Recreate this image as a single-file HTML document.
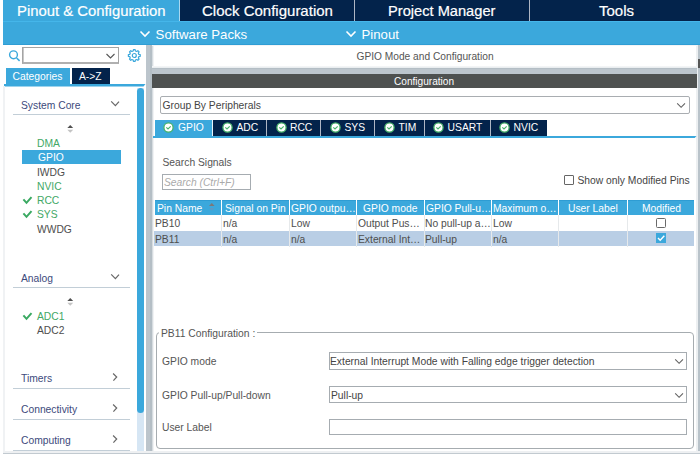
<!DOCTYPE html>
<html><head><meta charset="utf-8">
<style>
*{margin:0;padding:0;box-sizing:border-box}
html,body{width:700px;height:454px;overflow:hidden;background:#fff}
body{position:relative;font-family:"Liberation Sans",sans-serif}
.a{position:absolute}
.t{position:absolute;white-space:nowrap;font-family:"Liberation Sans",sans-serif;font-size:10.3px;line-height:1}
.tab{position:absolute;top:0;height:21px;background:#03234b}
.tt{position:absolute;white-space:nowrap;font-size:15px;line-height:1;color:#fff;top:3px;-webkit-text-stroke:0.2px #fff}
.sep{position:absolute;top:0;height:21px;width:1px;background:#aeb6c4}
.cat{color:#3d4a7c}
.grn{color:#42a866}
.drk{color:#4e4e4e}
.line{position:absolute;height:1px;background:#c2ced7}
.box{position:absolute;border:1px solid #a6acb1;background:#fff}
.hd{position:absolute;top:200px;height:15px;background:#3ba8dc;border-top:1px solid #2e9cd3}
.hdt{position:absolute;top:203.6px;color:#fff}
.cs{position:absolute;width:1px;background:#e6e9eb}
</style></head><body>
<!-- top tabs -->
<div class="a" style="left:3px;top:0;width:176px;height:21px;background:#3ba8dc"></div>
<div class="a" style="left:179px;top:0;width:1px;height:21px;background:#a8d8f0"></div>
<div class="tab" style="left:180px;width:174px"></div>
<div class="sep" style="left:354px"></div>
<div class="tab" style="left:355px;width:174px"></div>
<div class="sep" style="left:529px"></div>
<div class="tab" style="left:530px;width:170px"></div>
<div class="tt" style="left:17px;top:4px;font-size:14.85px">Pinout &amp; Configuration</div>
<div class="tt" style="left:202px">Clock Configuration</div>
<div class="tt" style="left:388px;top:4px;font-size:14.65px">Project Manager</div>
<div class="tt" style="left:599px">Tools</div>
<!-- software packs bar -->
<div class="a" style="left:3px;top:21px;width:697px;height:24px;background:#3ba8dc;border-top:1px solid #45b6ea;border-bottom:1px solid #2f9dd4"></div>
<svg class="a" style="left:139px;top:30px" width="12" height="8"><path d="M1.5 1.5 L6 6 L10.5 1.5" fill="none" stroke="#fff" stroke-width="1.6"/></svg>
<div class="t" style="left:155.6px;top:28px;font-size:13.2px;color:#fff">Software Packs</div>
<svg class="a" style="left:345px;top:30px" width="12" height="8"><path d="M1.5 1.5 L6 6 L10.5 1.5" fill="none" stroke="#fff" stroke-width="1.6"/></svg>
<div class="t" style="left:361.5px;top:28px;font-size:13.2px;color:#fff">Pinout</div>

<!-- separators -->
<div class="a" style="left:146px;top:45px;width:6px;height:409px;background:linear-gradient(90deg,#bcc5cc 0,#bcc5cc 4px,#b4bec5 4px,#b4bec5 6px)"></div><div class="a" style="left:152px;top:45px;width:1px;height:409px;background:#d6dce0"></div><div class="a" style="left:153px;top:45px;width:1px;height:409px;background:#f0f2f4"></div>
<div class="a" style="left:696px;top:45px;width:2px;height:407px;background:#eceff1"></div><div class="a" style="left:698px;top:45px;width:2px;height:407px;background:#b9c3ca"></div><div class="a" style="left:698px;top:59px;width:2px;height:9px;background:#555"></div>
<div class="a" style="left:3px;top:451px;width:697px;height:2px;background:#eef0f2"></div><div class="a" style="left:3px;top:453px;width:697px;height:1px;background:#c2cad0"></div>

<!-- LEFT PANEL -->
<svg class="a" style="left:7px;top:48px" width="16" height="16"><circle cx="6.5" cy="6.8" r="3.9" fill="none" stroke="#3ba8dc" stroke-width="1.4"/><path d="M9.6 10 L12.6 12.8" stroke="#3ba8dc" stroke-width="1.6"/></svg>
<div class="box" style="left:22px;top:47px;width:97px;height:17px;border:1px solid #a4a4a4;border-bottom:2px solid #b0b0b0;box-shadow:inset 1px 0 0 #c8c8c8"></div>
<svg class="a" style="left:105px;top:52px" width="11" height="8"><path d="M1.5 2 L5.5 6 L9.5 2" fill="none" stroke="#555" stroke-width="1.1"/></svg>
<svg class="a" style="left:127px;top:48px" width="15" height="15" viewBox="0.2 0 15 15"><g fill="none" stroke="#3ba8dc" stroke-width="1.2" stroke-linejoin="round"><path d="M6.65 1.56 L8.35 1.56 L8.60 2.93 L9.96 3.49 L11.10 2.70 L12.30 3.90 L11.51 5.04 L12.07 6.40 L13.44 6.65 L13.44 8.35 L12.07 8.60 L11.51 9.96 L12.30 11.10 L11.10 12.30 L9.96 11.51 L8.60 12.07 L8.35 13.44 L6.65 13.44 L6.40 12.07 L5.04 11.51 L3.90 12.30 L2.70 11.10 L3.49 9.96 L2.93 8.60 L1.56 8.35 L1.56 6.65 L2.93 6.40 L3.49 5.04 L2.70 3.90 L3.90 2.70 L5.04 3.49 L6.40 2.93Z"/><circle cx="7.5" cy="7.5" r="2"/></g></svg>
<div class="a" style="left:6px;top:68px;width:64px;height:16px;background:#3ba8dc"></div>
<div class="t" style="left:12.5px;top:72px;color:#fff">Categories</div>
<div class="a" style="left:72px;top:68px;width:38px;height:16px;background:#03234b"></div>
<div class="t" style="left:79px;top:72px;color:#fff">A-&gt;Z</div>
<div class="a" style="left:4px;top:84px;width:141.5px;height:2.5px;background:#3ba8dc;clip-path:polygon(0 0,100% 0,calc(100% - 2px) 100%,0 100%)"></div>
<div class="a" style="left:3px;top:86px;width:2px;height:366px;background:#f0f2f4"></div>
<!-- scrollbar -->
<div class="a" style="left:137px;top:88px;width:7px;height:363px;background:#d6e6f4"></div>
<div class="a" style="left:137px;top:88px;width:7px;height:325px;background:#3ba8dc;border-radius:3.5px"></div>

<div class="t cat" style="left:21px;top:101px">System Core</div>
<svg class="a" style="left:110px;top:99px" width="11" height="8"><path d="M1.2 2.4 L5.4 6.6 L9 2.6" fill="none" stroke="#686868" stroke-width="1.2"/></svg>
<div class="line" style="left:13px;top:114px;width:117px"></div>
<svg class="a" style="left:66px;top:124px" width="9" height="10"><path d="M1.3 4 L4.25 1 L7.2 4Z" fill="#505050"/><path d="M1.3 5.7 L4.25 8.8 L7.2 5.7Z" fill="#c4c4c4"/></svg>
<div class="t grn" style="left:37px;top:139px">DMA</div>
<div class="a" style="left:22px;top:150px;width:99px;height:14px;background:#3ba8dc"></div>
<div class="t" style="left:38px;top:153px;color:#fff">GPIO</div>
<div class="t drk" style="left:37px;top:168px">IWDG</div>
<div class="t grn" style="left:37px;top:182px">NVIC</div>
<svg class="a" style="left:22px;top:196px" width="11" height="9"><path d="M1.4 3.3 L4.5 6.8 L9.5 1.2" fill="none" stroke="#3aa962" stroke-width="2"/></svg>
<div class="t grn" style="left:37px;top:196px">RCC</div>
<svg class="a" style="left:22px;top:210px" width="11" height="9"><path d="M1.4 3.3 L4.5 6.8 L9.5 1.2" fill="none" stroke="#3aa962" stroke-width="2"/></svg>
<div class="t grn" style="left:37px;top:210px">SYS</div>
<div class="t drk" style="left:37px;top:225px">WWDG</div>

<div class="t cat" style="left:21px;top:274px">Analog</div>
<svg class="a" style="left:110px;top:271.5px" width="11" height="8"><path d="M1.2 2.4 L5.4 6.6 L9 2.6" fill="none" stroke="#686868" stroke-width="1.2"/></svg>
<div class="line" style="left:13px;top:287px;width:117px"></div>
<svg class="a" style="left:66px;top:296.5px" width="9" height="10"><path d="M1.3 4 L4.25 1 L7.2 4Z" fill="#505050"/><path d="M1.3 5.7 L4.25 8.8 L7.2 5.7Z" fill="#c4c4c4"/></svg>
<svg class="a" style="left:22px;top:312px" width="11" height="9"><path d="M1.4 3.3 L4.5 6.8 L9.5 1.2" fill="none" stroke="#3aa962" stroke-width="2"/></svg>
<div class="t grn" style="left:37px;top:312px">ADC1</div>
<div class="t drk" style="left:37px;top:326px">ADC2</div>

<div class="t cat" style="left:21px;top:374px">Timers</div>
<svg class="a" style="left:111px;top:372px" width="8" height="11"><path d="M2.1 1.5 L5.7 5 L2.4 8.6" fill="none" stroke="#686868" stroke-width="1.2"/></svg>
<div class="line" style="left:13px;top:388px;width:117px"></div>
<div class="t cat" style="left:21px;top:405px">Connectivity</div>
<svg class="a" style="left:111px;top:403px" width="8" height="11"><path d="M2.1 1.5 L5.7 5 L2.4 8.6" fill="none" stroke="#686868" stroke-width="1.2"/></svg>
<div class="line" style="left:13px;top:419px;width:117px"></div>
<div class="t cat" style="left:21px;top:436px">Computing</div>
<svg class="a" style="left:111px;top:434px" width="8" height="11"><path d="M2.1 1.5 L5.7 5 L2.4 8.6" fill="none" stroke="#686868" stroke-width="1.2"/></svg>
<div class="line" style="left:13px;top:450px;width:117px"></div>

<!-- RIGHT PANEL -->
<div class="a" style="left:152px;top:45px;width:545px;height:1px;background:#f2f4f6"></div><div class="a" style="left:152px;top:66px;width:545px;height:2px;background:linear-gradient(#f7f8f9,#e6eaed)"></div><div class="a" style="left:152px;top:68px;width:545px;height:6px;background:#bcc5cc;border-top:1px solid #b4bec5"></div>
<div class="t" style="left:356.5px;top:52px;color:#555;font-size:10.2px">GPIO Mode and Configuration</div>
<div class="a" style="left:152px;top:74px;width:545px;height:14px;background:#4e5150"></div>
<div class="t" style="left:394px;top:77px;color:#fff;font-size:10.1px">Configuration</div>

<div class="box" style="left:160px;top:96px;width:530px;height:18px;border-color:#a9adb1;border-radius:2px"></div>
<div class="t" style="left:162.5px;top:101px;color:#444">Group By Peripherals</div>
<svg class="a" style="left:676px;top:101px" width="11" height="8"><path d="M1.2 2.4 L5.1 6.3 L9 2.4" fill="none" stroke="#606060" stroke-width="1.1"/></svg>

<!-- tabs -->
<div class="a" style="left:155px;top:120px;width:57px;height:16px;background:#3ba8dc"></div>
<div class="a" style="left:212px;top:120px;width:1px;height:16px;background:#e8f4fb"></div>
<div class="a" style="left:213px;top:120px;width:334px;height:16px;background:#03234b"></div>
<div class="a" style="left:266px;top:120px;width:1px;height:16px;background:#aeb6c4"></div>
<div class="a" style="left:320px;top:120px;width:1px;height:16px;background:#aeb6c4"></div>
<div class="a" style="left:374px;top:120px;width:1px;height:16px;background:#aeb6c4"></div>
<div class="a" style="left:424px;top:120px;width:1px;height:16px;background:#aeb6c4"></div>
<div class="a" style="left:490px;top:120px;width:1px;height:16px;background:#aeb6c4"></div>
<div class="a" style="left:153px;top:136px;width:543.5px;height:2.3px;background:#3ba8dc;clip-path:polygon(0 0,100% 0,calc(100% - 2px) 100%,0 100%)"></div>
<svg class="a" style="left:163px;top:122px" width="11" height="11"><circle cx="5.5" cy="5.5" r="4.6" fill="#fff" stroke="#48b36a" stroke-width="1.3"/><path d="M3.3 5.4 L5 7 L7.7 4.3" fill="none" stroke="#48b36a" stroke-width="1.1"/></svg>
<div class="t" style="left:178px;top:123.4px;color:#fff">GPIO</div>
<svg class="a" style="left:222px;top:122px" width="11" height="11"><circle cx="5.5" cy="5.5" r="4.6" fill="#fff" stroke="#48b36a" stroke-width="1.3"/><path d="M3.3 5.4 L5 7 L7.7 4.3" fill="none" stroke="#48b36a" stroke-width="1.1"/></svg>
<div class="t" style="left:236.5px;top:123.4px;color:#fff">ADC</div>
<svg class="a" style="left:276px;top:122px" width="11" height="11"><circle cx="5.5" cy="5.5" r="4.6" fill="#fff" stroke="#48b36a" stroke-width="1.3"/><path d="M3.3 5.4 L5 7 L7.7 4.3" fill="none" stroke="#48b36a" stroke-width="1.1"/></svg>
<div class="t" style="left:290px;top:123.4px;color:#fff">RCC</div>
<svg class="a" style="left:330px;top:122px" width="11" height="11"><circle cx="5.5" cy="5.5" r="4.6" fill="#fff" stroke="#48b36a" stroke-width="1.3"/><path d="M3.3 5.4 L5 7 L7.7 4.3" fill="none" stroke="#48b36a" stroke-width="1.1"/></svg>
<div class="t" style="left:344.5px;top:123.4px;color:#fff">SYS</div>
<svg class="a" style="left:384px;top:122px" width="11" height="11"><circle cx="5.5" cy="5.5" r="4.6" fill="#fff" stroke="#48b36a" stroke-width="1.3"/><path d="M3.3 5.4 L5 7 L7.7 4.3" fill="none" stroke="#48b36a" stroke-width="1.1"/></svg>
<div class="t" style="left:398.5px;top:123.4px;color:#fff">TIM</div>
<svg class="a" style="left:433px;top:122px" width="11" height="11"><circle cx="5.5" cy="5.5" r="4.6" fill="#fff" stroke="#48b36a" stroke-width="1.3"/><path d="M3.3 5.4 L5 7 L7.7 4.3" fill="none" stroke="#48b36a" stroke-width="1.1"/></svg>
<div class="t" style="left:447.6px;top:123.4px;color:#fff">USART</div>
<svg class="a" style="left:499px;top:122px" width="11" height="11"><circle cx="5.5" cy="5.5" r="4.6" fill="#fff" stroke="#48b36a" stroke-width="1.3"/><path d="M3.3 5.4 L5 7 L7.7 4.3" fill="none" stroke="#48b36a" stroke-width="1.1"/></svg>
<div class="t" style="left:513.6px;top:123.4px;color:#fff">NVIC</div>

<div class="t" style="left:162.5px;top:158px;color:#555">Search Signals</div>
<div class="box" style="left:162px;top:174px;width:89px;height:16px"></div>
<div class="t" style="left:164px;top:178px;color:#aaa;font-style:italic">Search (Ctrl+F)</div>
<div class="box" style="left:564px;top:175px;width:10px;height:10px;border-color:#666;border-radius:1px"></div>
<div class="t" style="left:577.5px;top:176px;color:#444">Show only Modified Pins</div>

<!-- table -->
<div class="hd" style="left:155px;width:539px"></div>
<div class="a" style="left:154px;top:231px;width:540px;height:15px;background:#b9cee5"></div>
<div class="cs" style="left:221px;top:200px;height:47px"></div>
<div class="cs" style="left:289px;top:200px;height:47px"></div>
<div class="cs" style="left:356px;top:200px;height:47px"></div>
<div class="cs" style="left:424px;top:200px;height:47px"></div>
<div class="cs" style="left:491px;top:200px;height:47px"></div>
<div class="cs" style="left:558px;top:200px;height:47px"></div>
<div class="cs" style="left:627px;top:200px;height:47px"></div>
<div class="a" style="left:221px;top:200px;width:1px;height:15px;background:#fff"></div>
<div class="a" style="left:289px;top:200px;width:1px;height:15px;background:#fff"></div>
<div class="a" style="left:356px;top:200px;width:1px;height:15px;background:#fff"></div>
<div class="a" style="left:424px;top:200px;width:1px;height:15px;background:#fff"></div>
<div class="a" style="left:491px;top:200px;width:1px;height:15px;background:#fff"></div>
<div class="a" style="left:558px;top:200px;width:1px;height:15px;background:#fff"></div>
<div class="a" style="left:627px;top:200px;width:1px;height:15px;background:#fff"></div>
<div class="hdt t" style="left:157px">Pin Name</div>
<svg class="a" style="left:207px;top:202px" width="9" height="10"><path d="M2 4.1 L4.8 1 L7.6 4.1Z" fill="#7d7878"/><path d="M2.2 6 L4.8 8.8 L7.4 6Z" fill="#5d9ac4"/></svg>
<div class="hdt t" style="left:225px">Signal on Pin</div>
<div class="hdt t" style="left:291px">GPIO outpu…</div>
<div class="hdt t" style="left:363px">GPIO mode</div>
<div class="hdt t" style="left:426px">GPIO Pull-u…</div>
<div class="hdt t" style="left:493px">Maximum o…</div>
<div class="hdt t" style="left:568px">User Label</div>
<div class="hdt t" style="left:642px">Modified</div>

<div class="t drk" style="left:155px;top:219px">PB10</div>
<div class="t drk" style="left:223px;top:219px">n/a</div>
<div class="t drk" style="left:291px;top:219px">Low</div>
<div class="t drk" style="left:358px;top:219px">Output Pus…</div>
<div class="t drk" style="left:425px;top:219px">No pull-up a…</div>
<div class="t drk" style="left:493px;top:219px">Low</div>
<div class="box" style="left:656px;top:218px;width:10px;height:10px;border-color:#6a6a6a;border-radius:1.5px"></div>

<div class="t drk" style="left:155px;top:235px">PB11</div>
<div class="t drk" style="left:223px;top:235px">n/a</div>
<div class="t drk" style="left:291px;top:235px">n/a</div>
<div class="t drk" style="left:358px;top:235px">External Int…</div>
<div class="t drk" style="left:425px;top:235px">Pull-up</div>
<div class="t drk" style="left:493px;top:235px">n/a</div>
<div class="a" style="left:656px;top:233px;width:10px;height:10px;background:#3ba8dc"></div>
<svg class="a" style="left:656px;top:233px" width="10" height="10"><path d="M2 5 L4.2 7.2 L8.3 2.8" fill="none" stroke="#fff" stroke-width="1.4"/></svg>

<!-- group box -->
<div class="a" style="left:156px;top:332px;width:538px;height:117px;border:1px solid #a6acb0;border-radius:4px"></div>
<div class="t" style="left:159px;top:329px;background:#fff;padding:0 2px;color:#555">PB11 Configuration :</div>
<div class="t" style="left:162px;top:357px;color:#555">GPIO mode</div>
<div class="t" style="left:162px;top:391px;color:#555">GPIO Pull-up/Pull-down</div>
<div class="t" style="left:162px;top:423px;color:#555">User Label</div>
<div class="box" style="left:329px;top:352px;width:358px;height:18px"></div>
<div class="t" style="left:330px;top:357px;color:#444">External Interrupt Mode with Falling edge trigger detection</div>
<svg class="a" style="left:674px;top:357px" width="11" height="8"><path d="M1.2 2.4 L5.1 6.3 L9 2.4" fill="none" stroke="#606060" stroke-width="1.1"/></svg>
<div class="box" style="left:329px;top:386px;width:358px;height:17px"></div>
<div class="t" style="left:331px;top:391px;color:#444">Pull-up</div>
<svg class="a" style="left:674px;top:391px" width="11" height="8"><path d="M1.2 2.4 L5.1 6.3 L9 2.4" fill="none" stroke="#606060" stroke-width="1.1"/></svg>
<div class="box" style="left:329px;top:419px;width:358px;height:16px"></div>
</body></html>
